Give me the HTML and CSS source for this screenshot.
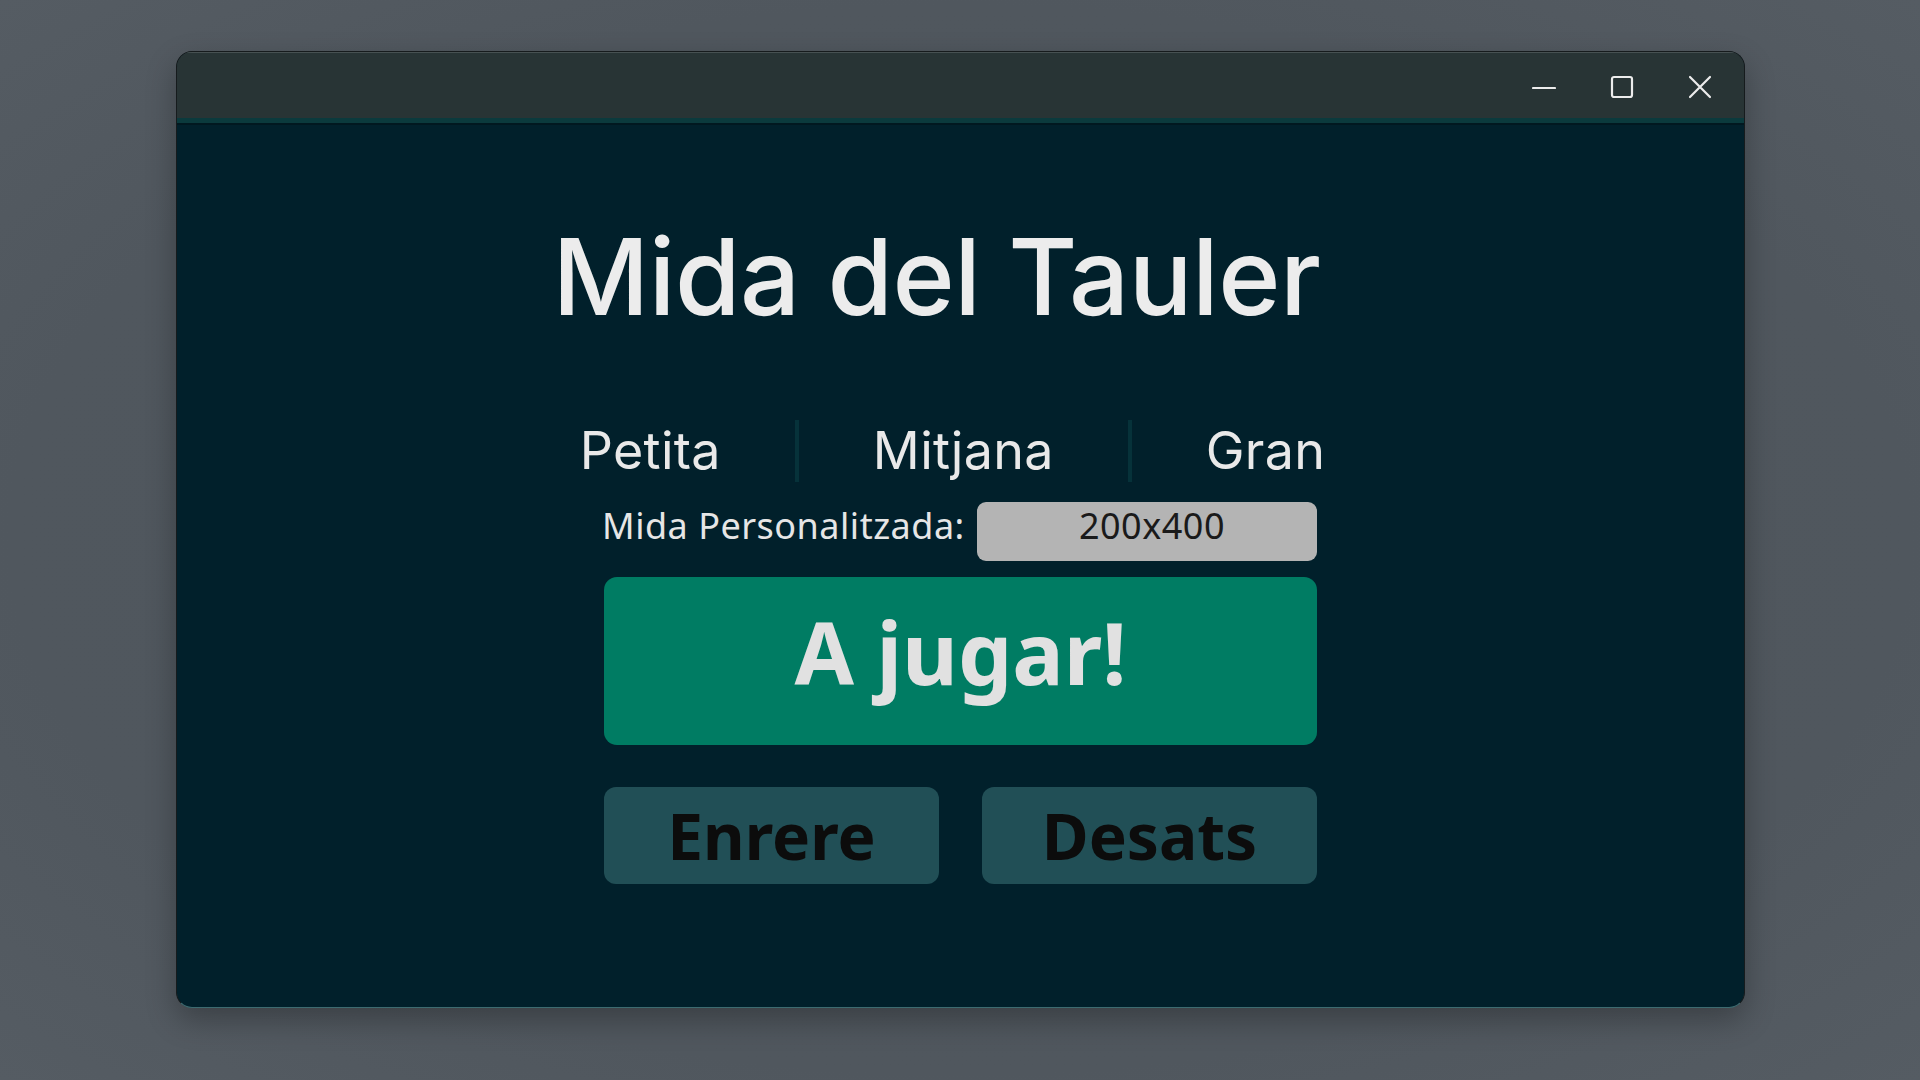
FILE: index.html
```html
<!DOCTYPE html>
<html lang="ca">
<head>
<meta charset="utf-8">
<title>Mida del Tauler</title>
<link rel="stylesheet" href="styles.css">
</head>
<body>
  <div class="window">
    <div class="titlebar">
      <div class="ctrl" aria-label="Minimitza">
        <svg width="24" height="24" viewBox="0 0 24 24"><path d="M1 13 H23" stroke="#ececec" stroke-width="2.2" stroke-linecap="round" fill="none"/></svg>
      </div>
      <div class="ctrl" aria-label="Maximitza">
        <svg width="24" height="24" viewBox="0 0 24 24"><rect x="2" y="2" width="20" height="20" rx="2" stroke="#ececec" stroke-width="2.2" fill="none"/></svg>
      </div>
      <div class="ctrl" aria-label="Tanca">
        <svg width="24" height="24" viewBox="0 0 24 24"><path d="M2 2 L22 22 M22 2 L2 22" stroke="#ececec" stroke-width="2.2" stroke-linecap="round" fill="none"/></svg>
      </div>
    </div>
    <div class="titleline"></div>
    <main class="content">
      <h1 class="title">Mida del Tauler</h1>
      <div class="sizes">
        <span class="size-opt">Petita</span>
        <span class="sep"></span>
        <span class="size-opt">Mitjana</span>
        <span class="sep"></span>
        <span class="size-opt">Gran</span>
      </div>
      <div class="custom-row">
        <span class="custom-label">Mida Personalitzada:</span>
        <div class="custom-field">200x400</div>
      </div>
      <button class="play-btn">A jugar!</button>
      <div class="bottom-row">
        <button class="sec-btn">Enrere</button>
        <button class="sec-btn">Desats</button>
      </div>
    </main>
  </div>
</body>
</html>
```

FILE: styles.css
```css
html, body {
  margin: 0;
  padding: 0;
}

body {
  width: 1920px;
  height: 1080px;
  box-sizing: border-box;
  padding: 51px 0 0 176px;
  background: radial-gradient(ellipse at center, #4f565c 0%, #50575e 70%, #555c63 100%);
  overflow: hidden;
}

.window {
  width: 1569px;
  height: 957px;
  box-sizing: border-box;
  border-radius: 16px;
  border: 1px solid #161b1d;
  border-bottom: 1px solid #3d6b70;
  background: #01202b;
  overflow: hidden;
  display: flex;
  flex-direction: column;
  box-shadow: 0 12px 30px rgba(0, 0, 0, 0.28), inset 0 1px 0 #4a5455;
}

.titlebar {
  height: 66px;
  flex: none;
  background: #283435;
  box-shadow: inset 0 1px 0 #475152;
  display: flex;
  justify-content: flex-end;
  align-items: center;
  padding: 3px 5px 0 0;
  box-sizing: border-box;
}

.ctrl {
  width: 78px;
  height: 40px;
  display: flex;
  align-items: center;
  justify-content: center;
}

.titleline {
  height: 5px;
  flex: none;
  background: #0b3a3d;
  border-bottom: 2px solid #011820;
}

.content {
  flex: 1;
  display: flex;
  flex-direction: column;
  align-items: center;
  padding-top: 99px;
}

.title {
  margin: 0 48px 0 0;
  font-family: "Inter", "Liberation Sans", sans-serif;
  font-weight: 500;
  font-size: 106px;
  line-height: 106px;
  color: #ececec;
  letter-spacing: -0.5px;
}

.sizes {
  margin-top: 90px;
  height: 62px;
  display: flex;
  align-items: center;
  gap: 74px;
  margin-right: 16px;
}

.size-opt {
  font-family: "Inter", "Liberation Sans", sans-serif;
  font-size: 52px;
  line-height: 62px;
  color: #e9e9e9;
  letter-spacing: 0.3px;
}

.sep {
  width: 4px;
  height: 62px;
  background: #06323a;
}

.custom-row {
  margin-top: 20px;
  width: 713px;
  height: 59px;
  display: flex;
  justify-content: space-between;
  align-items: flex-start;
}

.custom-label {
  font-family: "Noto Sans", "Open Sans", sans-serif;
  font-size: 36px;
  line-height: 47px;
  letter-spacing: 0.5px;
  color: #e6e6e6;
  margin-left: -2px;
}

.custom-field {
  width: 340px;
  height: 59px;
  border-radius: 9px;
  background: #b4b4b4;
  font-family: "Noto Sans", "Open Sans", sans-serif;
  font-size: 36px;
  line-height: 47px;
  letter-spacing: 0.5px;
  color: #1a1a1a;
  text-align: center;
  box-sizing: border-box;
  padding-left: 10px;
}

.play-btn {
  margin-top: 16px;
  width: 713px;
  height: 168px;
  border: none;
  border-radius: 13px;
  background: #007c63;
  color: #e1e1e1;
  font-family: "Noto Sans", "Open Sans", sans-serif;
  font-weight: 700;
  font-size: 86px;
  padding: 0 0 20px 0;
  display: flex;
  align-items: center;
  justify-content: center;
}

.bottom-row {
  margin-top: 42px;
  width: 713px;
  display: flex;
  justify-content: space-between;
}

.sec-btn {
  width: 335px;
  height: 97px;
  border: none;
  border-radius: 12px;
  background: #214f56;
  color: #0c0c0c;
  font-family: "Noto Sans", "Open Sans", sans-serif;
  font-weight: 700;
  font-size: 64px;
  padding: 0;
  display: flex;
  align-items: center;
  justify-content: center;
}
```
